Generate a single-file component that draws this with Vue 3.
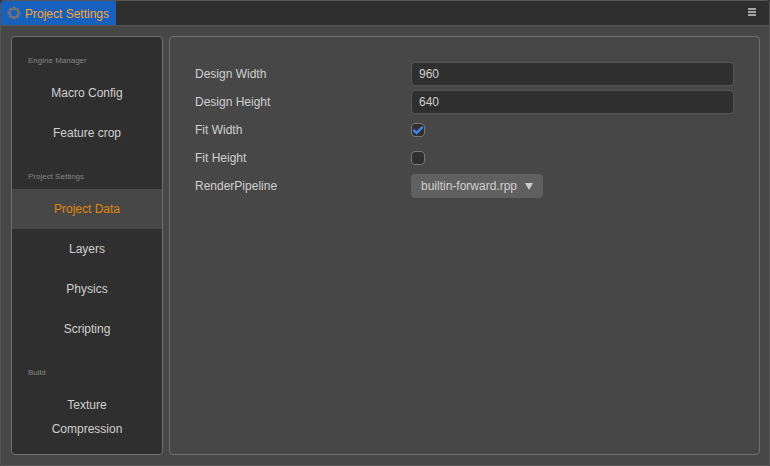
<script setup>
import { ref } from 'vue'

const groups = [
  { title: 'Engine Manager', items: ['Macro Config', 'Feature crop'] },
  { title: 'Project Settings', items: ['Project Data', 'Layers', 'Physics', 'Scripting'] },
  { title: 'Build', items: ['Texture Compression'] },
]
const active = ref('Project Data')
const width = ref('960')
const height = ref('640')
const fitWidth = ref(true)
const fitHeight = ref(false)
</script>

<template>
  <div class="window">
    <header class="titlebar">
      <div class="tab">
        <svg class="gear" viewBox="0 0 14 14" width="14" height="14">
          <g stroke="#6d7275" fill="none">
            <path d="M7 .4v13.2M.4 7h13.2M2.4 2.4l9.2 9.2M11.6 2.4l-9.2 9.2" stroke-width="2.8" />
            <circle cx="7" cy="7" r="4.3" stroke-width="2.6" />
          </g>
          <circle cx="7" cy="7" r="3.1" fill="#1760bd" />
        </svg>
        <span>Project Settings</span>
      </div>
      <svg class="menu" viewBox="0 0 8 8" width="8" height="8" shape-rendering="crispEdges">
        <path d="M0 0h8v2H0zM0 3h8v2H0zM0 6h8v2H0z" fill="#a6a6a6" />
      </svg>
    </header>
    <div class="body">
      <nav class="sidebar">
        <template v-for="g in groups" :key="g.title">
          <div class="group">{{ g.title }}</div>
          <div
            v-for="item in g.items"
            :key="item"
            class="item"
            :class="{ active: item === active }"
            @click="active = item"
          >{{ item }}</div>
        </template>
      </nav>
      <main class="panel">
        <div class="row">
          <label>Design Width</label>
          <input v-model="width" class="text" type="text" />
        </div>
        <div class="row">
          <label>Design Height</label>
          <input v-model="height" class="text" type="text" />
        </div>
        <div class="row">
          <label>Fit Width</label>
          <div class="check" @click="fitWidth = !fitWidth">
            <svg v-if="fitWidth" viewBox="0 0 12 12" width="12" height="12">
              <path d="M1.3 5.9L4.6 9L10.7 2.8" fill="none" stroke="#4580e6" stroke-width="2.6" />
            </svg>
          </div>
        </div>
        <div class="row">
          <label>Fit Height</label>
          <div class="check" @click="fitHeight = !fitHeight">
            <svg v-if="fitHeight" viewBox="0 0 12 12" width="12" height="12">
              <path d="M1.3 5.9L4.6 9L10.7 2.8" fill="none" stroke="#4580e6" stroke-width="2.6" />
            </svg>
          </div>
        </div>
        <div class="row">
          <label>RenderPipeline</label>
          <div class="select">
            <span>builtin-forward.rpp</span>
            <svg viewBox="0 0 8 7" width="8" height="7">
              <path d="M0 0h8L4 7z" fill="#cccccc" />
            </svg>
          </div>
        </div>
      </main>
    </div>
  </div>
</template>

<style>
body {
  background: #333;
}
</style>

<style scoped>
.window {
  box-sizing: border-box;
  width: 770px;
  height: 466px;
  display: flex;
  flex-direction: column;
  border: 1px solid #555;
  border-radius: 4px 4px 0 0;
  overflow: hidden;
  background: #474747;
  color: #d0d0d0;
  font: 12px "Liberation Sans", Arial, sans-serif;
}
.titlebar {
  height: 24px;
  flex: none;
  display: flex;
  align-items: center;
  justify-content: space-between;
  background: #2f2f2f;
  border-bottom: 1px solid #555;
}
.tab {
  height: 24px;
  width: 115px;
  box-sizing: border-box;
  display: flex;
  align-items: center;
  gap: 4px;
  padding: 1px 0 0 6px;
  background: #1760bd;
  color: #fda52c;
  white-space: nowrap;
}
.gear {
  flex: none;
  margin-top: -1px;
}
.menu {
  margin-right: 13px;
  margin-top: -2px;
}
.body {
  flex: 1;
  min-height: 0;
  display: flex;
  gap: 6px;
  padding: 10px 9px 10px 10px;
}
.sidebar,
.panel {
  box-sizing: border-box;
  border: 1px solid #6f6f6f;
  border-radius: 4px;
}
.sidebar {
  width: 152px;
  flex: none;
  background: #2f2f2f;
  overflow: hidden;
}
.group {
  height: 36px;
  box-sizing: border-box;
  padding: 18px 16px 0;
  font-size: 8px;
  line-height: 12px;
  color: #858585;
}
.item {
  padding: 8px 32px;
  line-height: 24px;
  text-align: center;
}
.item.active {
  background: #474747;
  color: #e0860a;
}
.panel {
  flex: 1;
  display: flex;
  flex-direction: column;
  gap: 4px;
  padding: 25px;
}
.row {
  height: 24px;
  display: flex;
  align-items: center;
}
.row label {
  width: 216px;
  flex: none;
}
.text {
  flex: 1;
  min-width: 0;
  height: 24px;
  box-sizing: border-box;
  margin: 0;
  padding: 0 7px;
  border: 1px solid #555;
  border-radius: 4px;
  outline: none;
  background: #2f2f2f;
  color: #d0d0d0;
  font: inherit;
}
.check {
  width: 14px;
  height: 14px;
  box-sizing: border-box;
  border: 1px solid #777;
  border-radius: 4px;
  background: #2f2f2f;
}
.check svg {
  display: block;
}
.select {
  width: 132px;
  height: 24px;
  box-sizing: border-box;
  display: flex;
  align-items: center;
  justify-content: space-between;
  padding: 0 10px;
  border-radius: 4px;
  background: #606060;
}
</style>
